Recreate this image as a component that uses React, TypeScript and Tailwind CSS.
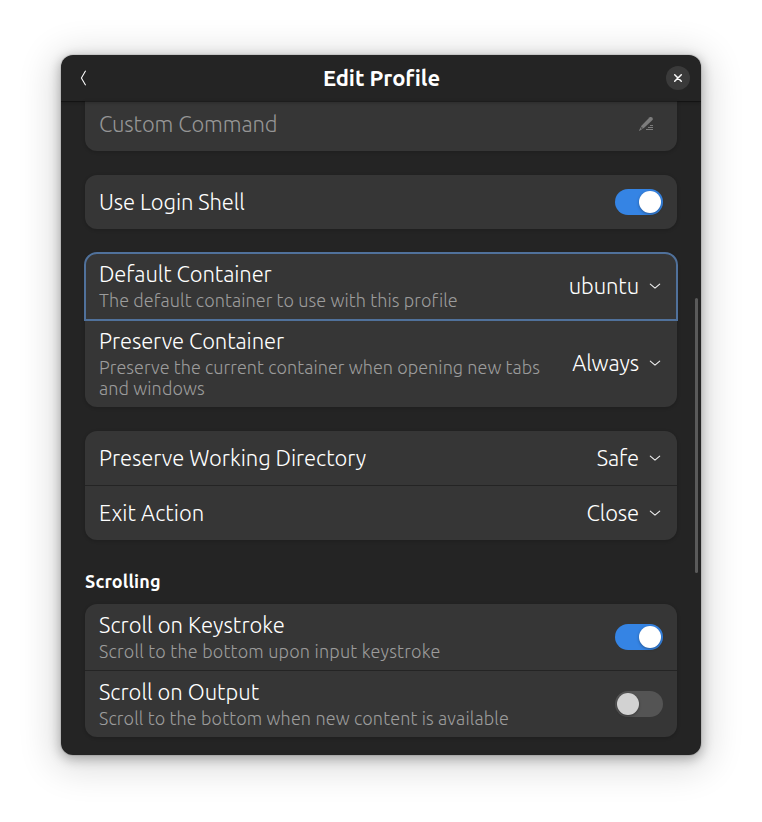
import type { ReactNode } from "react";

function Chevron() {
  return (
    <svg className="ml-2 h-4 w-4 shrink-0" viewBox="0 0 16 16" fill="none" stroke="#f2f2f2" strokeWidth="1.1" strokeLinecap="round" strokeLinejoin="round">
      <path d="M3.3 6.2 8 10.2 12.7 6.2" />
    </svg>
  );
}

function Switch({ on }: { on?: boolean }) {
  return (
    <div className={`flex h-[26px] w-12 shrink-0 items-center rounded-full px-0.5 ${on ? "justify-end bg-[#3584e4]" : "justify-start bg-[#545454]"}`}>
      <div className={`h-[22px] w-[22px] rounded-full shadow-[0_1px_3px_rgba(0,0,0,0.35)] ${on ? "bg-white" : "bg-[#d2d2d2]"}`} />
    </div>
  );
}

function Value({ text }: { text: string }) {
  return (
    <div className="flex items-center text-[22px] leading-7 tracking-[-0.12px]">
      {text}
      <Chevron />
    </div>
  );
}

type Line = { text: string; spacing: string };

function Row({ title, spacing, subtitle, className = "", children }: { title: string; spacing: string; subtitle?: Line[]; className?: string; children?: ReactNode }) {
  return (
    <div className={`flex items-center justify-between px-[14px] ${className}`}>
      <div className={`min-w-0 ${subtitle ? "self-start pt-[9px]" : ""}`}>
        <div className={`whitespace-nowrap text-[22px] ${spacing} ${subtitle ? "mb-1 leading-[24px]" : "leading-7"}`}>{title}</div>
        {subtitle?.map((line) => (
          <div key={line.text} className={`whitespace-nowrap text-[18px] leading-[21px] text-[#9c9c9c] ${line.spacing}`}>{line.text}</div>
        ))}
      </div>
      {children}
    </div>
  );
}

const card = "shrink-0 rounded-xl bg-[#363636] shadow-[0_1px_3px_1px_rgba(0,0,0,0.12)]";

export default function App() {
  return (
    <div className="flex h-[822px] w-[762px] bg-white pl-[61px] pt-[55px] font-['Ubuntu','Open_Sans',sans-serif] font-light text-white">
      <div className="flex h-[700px] w-[640px] flex-col overflow-hidden rounded-xl bg-[#242424] shadow-[0_3px_12px_1px_rgba(0,0,0,0.28),0_6px_36px_8px_rgba(0,0,0,0.14),0_0_0_1px_rgba(0,0,0,0.08)]">
        <header className="z-10 flex h-[46px] shrink-0 items-center justify-between px-[11px] shadow-[0_1px_0_rgba(0,0,0,0.35),0_2px_3px_rgba(0,0,0,0.2)]">
          <svg className="ml-1 h-4 w-5" viewBox="0 0 20 16" fill="none" stroke="#fafafa" strokeWidth="1.1">
            <path d="M9.6 .7 5.4 8 9.6 15.3" />
          </svg>
          <h1 className="pl-px text-[22px] font-bold leading-7 tracking-[-0.06px]">Edit Profile</h1>
          <div className="flex h-6 w-6 items-center justify-center rounded-full bg-[#3a3a3a]">
            <svg className="h-4 w-4" viewBox="0 0 16 16" fill="none" stroke="#fafafa" strokeWidth="1.5" strokeLinecap="round">
              <path d="m4.7 4.7 6.6 6.6m0-6.6-6.6 6.6" />
            </svg>
          </div>
        </header>
        <div className="flex min-h-0 flex-1">
          <main className="flex w-[634px] flex-col pl-6 pr-[18px]">
            <div className="flex h-[50px] shrink-0 items-start justify-between rounded-b-xl bg-[#363636] pl-[14px] pr-[23px] pt-[9px] shadow-[0_1px_3px_1px_rgba(0,0,0,0.12)]">
              <span className="text-[22px] leading-7 tracking-[-0.12px] text-[#959595]">Custom Command</span>
              <svg className="mt-[6px] h-4 w-4" viewBox="0 0 16 16" fill="#7c7c7c">
                <path d="M11.7 1.3c.6-.5 1.3-.5 1.9 0l.9.9c.5.6.5 1.2 0 1.8L6.2 11.7 1.2 14.9 1 14.4l2.7-5Z" />
                <path d="M12 9h3v1h-3zM10 11h5v1h-5zM8 13h7v1H8z" />
                <circle cx="3.8" cy="12" r=".8" fill="#363636" />
              </svg>
            </div>
            <section className={`mt-6 ${card}`}>
              <Row title="Use Login Shell" spacing="tracking-[-0.1px]" className="h-[54px]"><Switch on /></Row>
            </section>
            <section className={`mt-6 ${card}`}>
              <Row title="Default Container" spacing="tracking-[-0.1px]" className="h-[67px] rounded-t-xl outline-2 -outline-offset-1 outline-[#50719b]" subtitle={[{ text: "The default container to use with this profile", spacing: "tracking-[0.08px]" }]}>
                <div className="pb-0.5"><Value text="ubuntu" /></div>
              </Row>
              <Row title="Preserve Container" spacing="tracking-[-0.1px]" className="h-[87px]" subtitle={[{ text: "Preserve the current container when opening new tabs", spacing: "tracking-[0.05px]" }, { text: "and windows", spacing: "tracking-[0.1px]" }]}>
                <div className="pb-0.5"><Value text="Always" /></div>
              </Row>
            </section>
            <section className={`mt-6 ${card}`}>
              <Row title="Preserve Working Directory" spacing="tracking-[-0.06px]" className="h-[55px] border-b border-[#242424]">
                <Value text="Safe" />
              </Row>
              <Row title="Exit Action" spacing="tracking-[0.03px]" className="h-[54px]">
                <Value text="Close" />
              </Row>
            </section>
            <h2 className="mt-[29px] shrink-0 text-[18px] font-bold leading-6 tracking-[0.16px]">Scrolling</h2>
            <section className={`mt-[11px] ${card}`}>
              <Row title="Scroll on Keystroke" spacing="tracking-[0.04px]" className="h-[67px] border-b border-[#242424]" subtitle={[{ text: "Scroll to the bottom upon input keystroke", spacing: "tracking-[0.2px]" }]}>
                <Switch on />
              </Row>
              <Row title="Scroll on Output" spacing="tracking-[0px]" className="h-[66px]" subtitle={[{ text: "Scroll to the bottom when new content is available", spacing: "tracking-[0.12px]" }]}>
                <Switch />
              </Row>
            </section>
          </main>
          <div className="mt-[197px] h-[275px] w-[3px] rounded-full bg-[#5a5a5a]" />
        </div>
      </div>
    </div>
  );
}
